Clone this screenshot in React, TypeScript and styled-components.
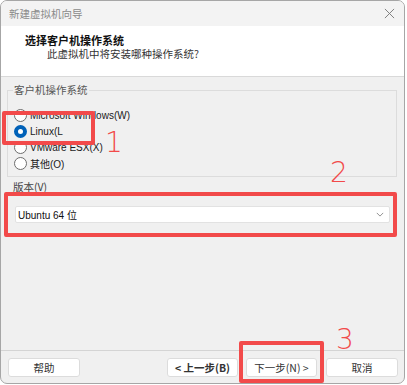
import React from 'react';
import styled, {createGlobalStyle} from 'styled-components';

const GlobalStyle = createGlobalStyle`
  html, body {
    margin: 0;
    padding: 0;
    background: #ffffff;
  }
  body {
    font-family: "Noto Sans CJK SC", "Liberation Sans", sans-serif;
    font-size: 10.5px;
  }
`;

const RED = '#f24a4a';

interface OsOption {
  label: string;
  checked?: boolean;
}

const osOptions: OsOption[] = [
  {label: 'Microsoft Windows(W)'},
  {label: 'Linux(L', checked: true},
  {label: 'VMware ESX(X)'},
  {label: '其他(O)'},
];

const App: React.FC = () => {
  return (
    <>
      <GlobalStyle />
      <Window>
        <TitleBar>
          <span>新建虚拟机向导</span>
          <CloseX viewBox="0 0 12 12">
            <path d="M1 1 L11 11 M11 1 L1 11" />
          </CloseX>
        </TitleBar>

        <Header>
          <HeaderTitle>选择客户机操作系统</HeaderTitle>
          <HeaderSub>此虚拟机中将安装哪种操作系统?</HeaderSub>
        </Header>

        <Body>
          <GroupBox>
            <Legend>客户机操作系统</Legend>
            <RadioList>
              {osOptions.map((o) => (
                <RadioRow key={o.label}>
                  <RadioDot $checked={o.checked} />
                  <RadioText>{o.label}</RadioText>
                </RadioRow>
              ))}
            </RadioList>
          </GroupBox>

          <FieldLabel>版本(V)</FieldLabel>
          <Select>
            <span>Ubuntu 64 位</span>
            <Chevron viewBox="0 0 10 6">
              <path d="M1 1 L5 5 L9 1" />
            </Chevron>
          </Select>
        </Body>

        <Footer>
          <Button $width={72}>帮助</Button>
          <ButtonGroup>
            <Button $width={71} $strong>&lt; 上一步(B)</Button>
            <Button $width={71} $mr={1}>下一步(N) &gt;</Button>
            <Button $width={72}>取消</Button>
          </ButtonGroup>
        </Footer>

        <Mark $x={2} $y={111} $w={93} $h={34} />
        <MarkNum $x={105} $y={129}>1</MarkNum>
        <Mark $x={4} $y={192} $w={393} $h={45} />
        <MarkNum $x={330} $y={159}>2</MarkNum>
        <Mark $x={239} $y={341} $w={85} $h={42} />
        <MarkNum $x={336} $y={326}>3</MarkNum>
      </Window>
    </>
  );
};

const Window = styled.div`
  position: relative;
  box-sizing: border-box;
  width: 405px;
  height: 384px;
  border: 1px solid #a6a6a6;
  border-radius: 7px;
  background: #f0f0f0;
  overflow: hidden;
  display: flex;
  flex-direction: column;
`;

const TitleBar = styled.div`
  height: 25px;
  flex-shrink: 0;
  box-sizing: border-box;
  display: flex;
  align-items: center;
  justify-content: space-between;
  padding: 0 9px 0 8px;
  background: #f3f3f3;
  color: #8a8a8a;
  font-size: 10.5px;
`;

const CloseX = styled.svg`
  width: 11px;
  height: 11px;
  stroke: #777;
  stroke-width: 1;
  fill: none;
`;

const Header = styled.div`
  height: 51px;
  flex-shrink: 0;
  box-sizing: border-box;
  background: #ffffff;
  border-bottom: 1px solid #d9d9d9;
  padding: 7px 0 0 24px;
  display: flex;
  flex-direction: column;
`;

const HeaderTitle = styled.div`
  font-weight: bold;
  font-size: 11px;
  line-height: 14px;
  color: #111;
`;

const HeaderSub = styled.div`
  font-size: 10.5px;
  line-height: 14px;
  color: #333;
  padding-left: 22px;
`;

const Body = styled.div`
  flex: 1;
  padding: 5px 7px 0 6px;
  display: flex;
  flex-direction: column;
`;

const GroupBox = styled.fieldset`
  margin: 0;
  height: 95px;
  box-sizing: border-box;
  border: 1px solid #dcdcdc;
  padding: 9px 0 0 6px;
`;

const Legend = styled.legend`
  padding: 0 1px;
  margin-left: -1px;
  font-size: 10.5px;
  line-height: 16px;
  color: #555;
`;

const RadioList = styled.div`
  display: flex;
  flex-direction: column;
`;

const RadioRow = styled.div`
  display: flex;
  align-items: center;
  height: 16px;
  gap: 3px;
`;

const RadioDot = styled.span<{$checked?: boolean}>`
  box-sizing: border-box;
  width: 13px;
  height: 13px;
  border-radius: 50%;
  background: #ffffff;
  border: ${(p) => (p.$checked ? '4px solid #0061b8' : '1px solid #6d6d6d')};
`;

const RadioText = styled.span`
  font-family: "Liberation Sans", "Noto Sans CJK SC", sans-serif;
  font-size: 10px;
  color: #1a1a1a;
`;

const FieldLabel = styled.div`
  margin: 3px 0 0 6px;
  font-size: 10.5px;
  line-height: 14px;
  color: #444;
`;

const Select = styled.div`
  margin: 12px 7px 0 8px;
  height: 17px;
  box-sizing: border-box;
  background: #ffffff;
  border: 1px solid #e2e2e2;
  border-radius: 2px;
  display: flex;
  align-items: center;
  justify-content: space-between;
  padding: 0 5px 0 2px;
  font-family: "Liberation Sans", "Noto Sans CJK SC", sans-serif;
  font-size: 10px;
  color: #111;
`;

const Chevron = styled.svg`
  width: 8px;
  height: 5px;
  stroke: #777;
  stroke-width: 1;
  fill: none;
`;

const Footer = styled.div`
  height: 33px;
  flex-shrink: 0;
  box-sizing: border-box;
  border-top: 1px solid #d4d4d4;
  display: flex;
  align-items: flex-start;
  justify-content: space-between;
  padding: 7px 6px 0 7px;
`;

const ButtonGroup = styled.div`
  display: flex;
  gap: 8px;
`;

const Button = styled.div<{$width: number; $strong?: boolean; $mr?: number}>`
  width: ${(p) => p.$width}px;
  height: 19px;
  margin-right: ${(p) => p.$mr ?? 0}px;
  box-sizing: border-box;
  background: #ffffff;
  border: 1px solid #dcdcdc;
  border-radius: 3px;
  display: flex;
  align-items: center;
  justify-content: center;
  font-size: 10.5px;
  color: #333;
  font-weight: ${(p) => (p.$strong ? 600 : 400)};
`;

const Mark = styled.div<{$x: number; $y: number; $w: number; $h: number}>`
  position: absolute;
  left: ${(p) => p.$x - 1}px;
  top: ${(p) => p.$y - 1}px;
  width: ${(p) => p.$w}px;
  height: ${(p) => p.$h}px;
  box-sizing: border-box;
  border: 4px solid ${RED};
  border-radius: 2px;
`;

const MarkNum = styled.div<{$x: number; $y: number}>`
  position: absolute;
  left: ${(p) => p.$x - 1}px;
  top: ${(p) => p.$y - 1}px;
  font-family: "DejaVu Sans", sans-serif;
  font-weight: 200;
  font-size: 28px;
  line-height: 28px;
  color: ${RED};
`;

export default App;
